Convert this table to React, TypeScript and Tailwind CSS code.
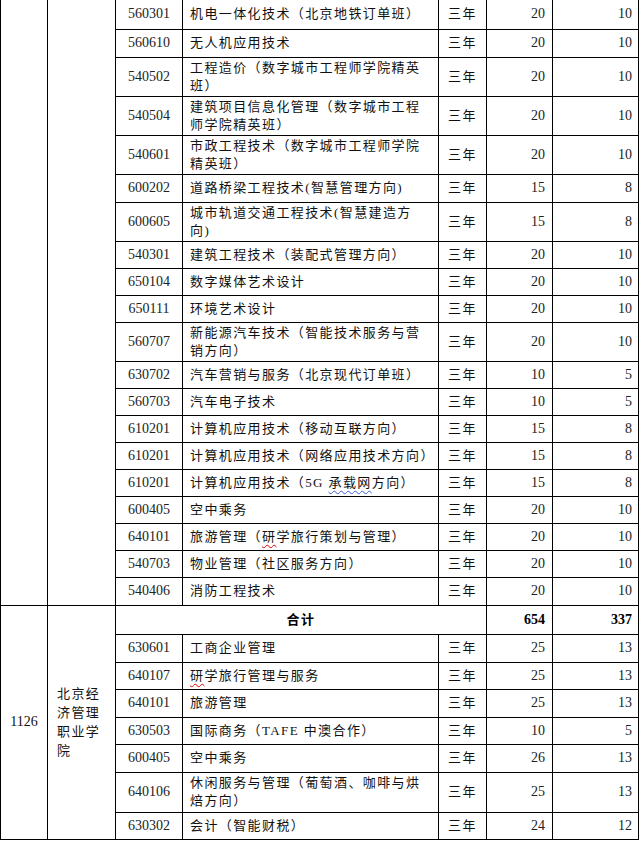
import React from "react";

type Row = { code: string; name: React.ReactNode[]; a: string; b: string; h: number };

const Red = ({ children }: { children: React.ReactNode }) => (
  <span className="underline decoration-wavy decoration-[#e00000] decoration-[1px] underline-offset-[3px]">{children}</span>
);
const Blue = ({ children }: { children: React.ReactNode }) => (
  <span className="underline decoration-wavy decoration-[#3b5bdb] decoration-[1px] underline-offset-[3px]">{children}</span>
);

const top: Row[] = [
  { code: "560301", name: ["机电一体化技术（北京地铁订单班）"], a: "20", b: "10", h: 29 },
  { code: "560610", name: ["无人机应用技术"], a: "20", b: "10", h: 28 },
  { code: "540502", name: ["工程造价（数字城市工程师学院精英", "班）"], a: "20", b: "10", h: 39 },
  { code: "540504", name: ["建筑项目信息化管理（数字城市工程", "师学院精英班）"], a: "20", b: "10", h: 39 },
  { code: "540601", name: ["市政工程技术（数字城市工程师学院", "精英班）"], a: "20", b: "10", h: 39 },
  { code: "600202", name: ["道路桥梁工程技术(智慧管理方向)"], a: "15", b: "8", h: 28 },
  { code: "600605", name: ["城市轨道交通工程技术(智慧建造方", "向)"], a: "15", b: "8", h: 39 },
  { code: "540301", name: ["建筑工程技术（装配式管理方向）"], a: "20", b: "10", h: 27 },
  { code: "650104", name: ["数字媒体艺术设计"], a: "20", b: "10", h: 27 },
  { code: "650111", name: ["环境艺术设计"], a: "20", b: "10", h: 27 },
  { code: "560707", name: ["新能源汽车技术（智能技术服务与营", "销方向）"], a: "20", b: "10", h: 39 },
  { code: "630702", name: ["汽车营销与服务（北京现代订单班）"], a: "10", b: "5", h: 27 },
  { code: "560703", name: ["汽车电子技术"], a: "10", b: "5", h: 27 },
  { code: "610201", name: ["计算机应用技术（移动互联方向）"], a: "15", b: "8", h: 27 },
  { code: "610201", name: ["计算机应用技术（网络应用技术方向）"], a: "15", b: "8", h: 27 },
  {
    code: "610201",
    name: [
      <>
        计算机应用技术（5G <Blue>承载网</Blue>方向）
      </>,
    ],
    a: "15",
    b: "8",
    h: 27,
  },
  { code: "600405", name: ["空中乘务"], a: "20", b: "10", h: 27 },
  {
    code: "640101",
    name: [
      <>
        旅游管理（<Red>研</Red>学旅行策划与管理）
      </>,
    ],
    a: "20",
    b: "10",
    h: 27,
  },
  { code: "540703", name: ["物业管理（社区服务方向）"], a: "20", b: "10", h: 27 },
  { code: "540406", name: ["消防工程技术"], a: "20", b: "10", h: 28 },
];

const bottom: Row[] = [
  { code: "630601", name: ["工商企业管理"], a: "25", b: "13", h: 28 },
  {
    code: "640107",
    name: [
      <>
        <Red>研</Red>学旅行管理与服务
      </>,
    ],
    a: "25",
    b: "13",
    h: 27,
  },
  { code: "640101", name: ["旅游管理"], a: "25", b: "13", h: 28 },
  { code: "630503", name: ["国际商务（TAFE 中澳合作）"], a: "10", b: "5", h: 27 },
  { code: "600405", name: ["空中乘务"], a: "26", b: "13", h: 28 },
  { code: "640106", name: ["休闲服务与管理（葡萄酒、咖啡与烘", "焙方向）"], a: "25", b: "13", h: 40 },
  { code: "630302", name: ["会计（智能财税）"], a: "24", b: "12", h: 27 },
];

const cell = "border border-black p-0 align-middle";
const cjk = "text-[13px] tracking-[1.4px] leading-[18px]";
const num = "text-[14px] leading-[18px]";

function Cells({ r }: { r: Row }) {
  return (
    <>
      <td className={`${cell} ${num} text-center text-[#222]`}>{r.code}</td>
      <td className={`${cell} ${cjk} pl-[7px] text-left whitespace-nowrap overflow-hidden text-[#111]`}>
        {r.name.map((l, i) => (
          <div key={i}>{l}</div>
        ))}
      </td>
      <td className={`${cell} ${cjk} text-center text-[#111]`}>三年</td>
      <td className={`${cell} ${num} text-right pr-[7px] text-[#222]`}>{r.a}</td>
      <td className={`${cell} ${num} text-right pr-[6px] text-[#222]`}>{r.b}</td>
    </>
  );
}

export default function App() {
  return (
    <div
      className="w-[640px] h-[842px] bg-white overflow-hidden"
      style={{ fontFamily: '"Liberation Serif", "Noto Sans CJK SC", serif' }}
    >
      <table className="table-fixed border-collapse w-[638px]">
        <colgroup>
          <col className="w-[47px]" />
          <col className="w-[68px]" />
          <col className="w-[67px]" />
          <col className="w-[256px]" />
          <col className="w-[48px]" />
          <col className="w-[66px]" />
          <col className="w-[86px]" />
        </colgroup>
        <tbody>
          {top.map((r, i) => (
            <tr key={"t" + i} style={{ height: r.h }} className={i === 0 ? "[&>td]:border-t-0" : ""}>
              {i === 0 && (
                <>
                  <td className={cell} rowSpan={top.length}></td>
                  <td className={cell} rowSpan={top.length}></td>
                </>
              )}
              <Cells r={r} />
            </tr>
          ))}
          <tr style={{ height: 29 }}>
            <td className={`${cell} ${num} text-center text-[#111]`} rowSpan={bottom.length + 1}>
              1126
            </td>
            <td className={`${cell} ${cjk} text-left pl-[9px] leading-[19px] text-[#111]`} rowSpan={bottom.length + 1}>
              <div>北京经</div>
              <div>济管理</div>
              <div>职业学</div>
              <div>院</div>
            </td>
            <td colSpan={3} className={`${cell} ${cjk} text-center font-bold text-black`}>
              合计
            </td>
            <td className={`${cell} ${num} text-right pr-[7px] font-bold text-black`}>654</td>
            <td className={`${cell} ${num} text-right pr-[6px] font-bold text-black`}>337</td>
          </tr>
          {bottom.map((r, i) => (
            <tr key={"b" + i} style={{ height: r.h }}>
              <Cells r={r} />
            </tr>
          ))}
        </tbody>
      </table>
    </div>
  );
}
